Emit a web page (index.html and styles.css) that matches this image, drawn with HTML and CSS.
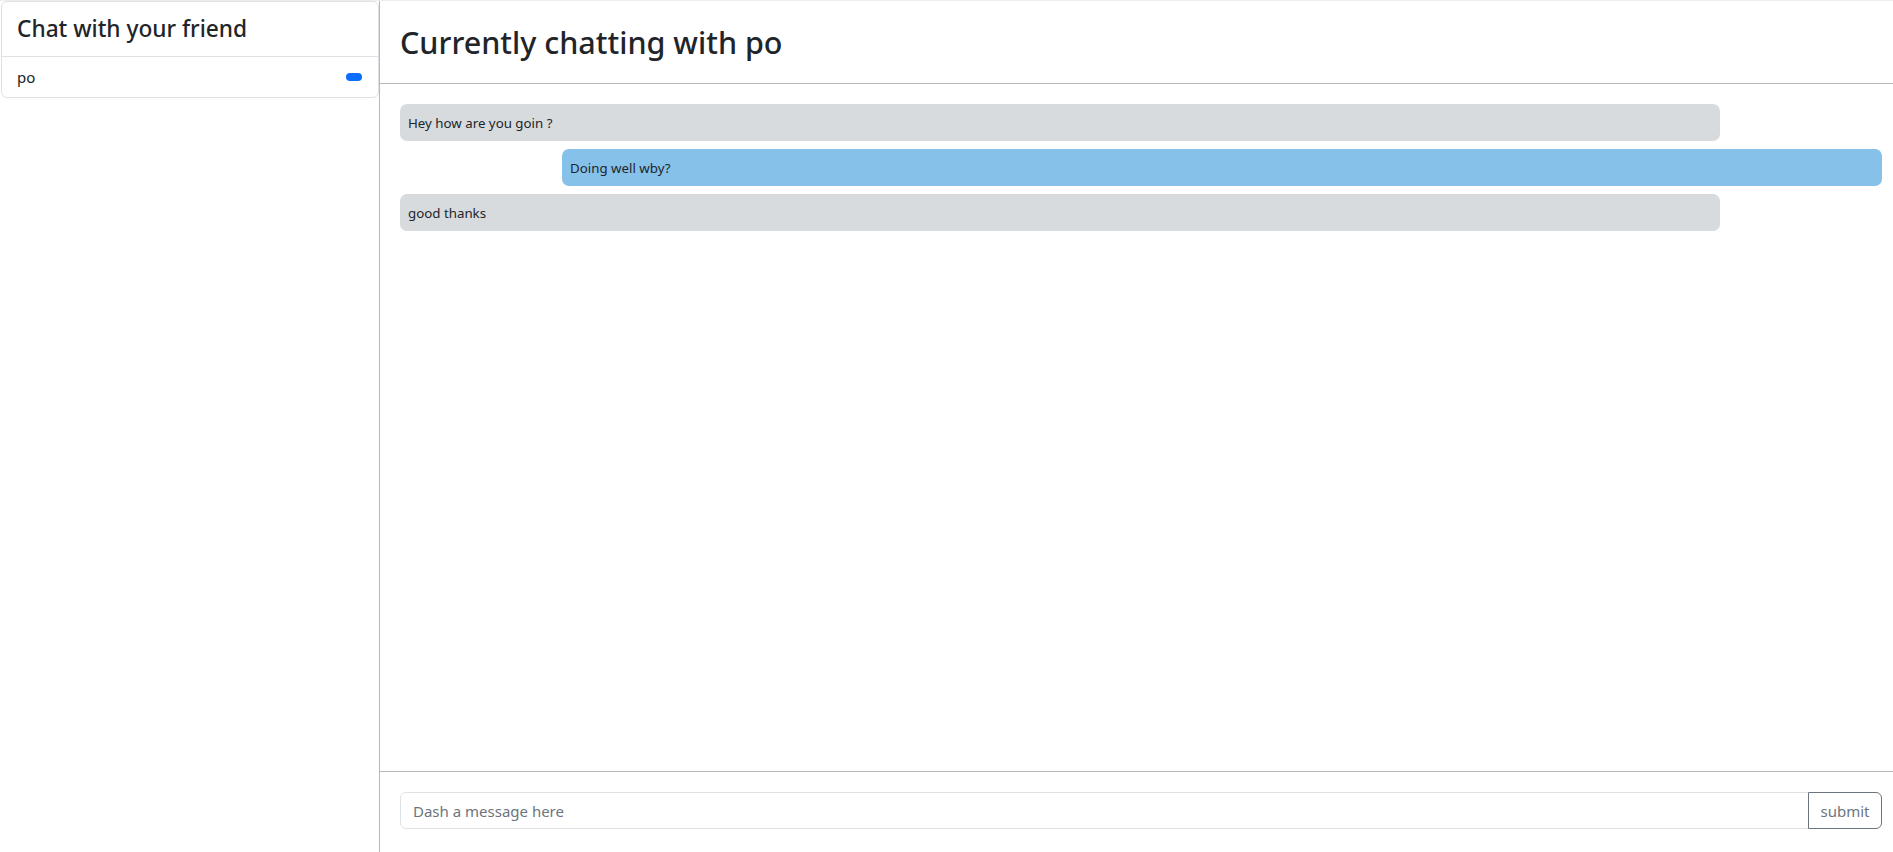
FILE: index.html
```html
<!DOCTYPE html>
<html lang="en">
<head>
<meta charset="utf-8">
<title>Chat</title>
<link rel="stylesheet" href="styles.css">
</head>
<body>
<div class="app">
  <aside class="sidebar">
    <div class="card">
      <div class="card-header"><h4 class="card-title">Chat with your friend</h4></div>
      <ul class="friend-list">
        <li class="friend-item"><span>po</span><span class="badge"></span></li>
      </ul>
    </div>
  </aside>
  <main class="chat">
    <header class="chat-header"><h2 class="chat-title">Currently chatting with po</h2></header>
    <section class="messages">
      <div class="bubble incoming">Hey how are you goin ?</div>
      <div class="bubble outgoing">Doing well wby?</div>
      <div class="bubble incoming">good thanks</div>
    </section>
    <footer class="composer">
      <form class="input-group">
        <input class="msg-input" type="text" placeholder="Dash a message here">
        <button class="submit-btn" type="button">submit</button>
      </form>
    </footer>
  </main>
</div>
</body>
</html>
```
FILE: styles.css
```css
* { box-sizing: border-box; }
html, body { margin: 0; padding: 0; }
body {
  font-family: "Noto Sans", "Open Sans", sans-serif;
  color: #212529;
  background: #fff;
  font-size: 16px;
}
.app {
  display: flex;
  height: 852px;
  border-top: 1px solid #eeeeee;
}
.sidebar {
  width: 380px;
  flex: none;
  border-right: 1px solid #b4b9be;
  padding-left: 1px;
}
.card {
  border: 1px solid #dee2e6;
  border-radius: 6px;
  margin-top: 0;
}
.card-header {
  height: 55px;
  padding: 0 15px;
  display: flex;
  align-items: center;
  border-bottom: 1px solid #dee2e6;
}
.card-title {
  margin: 0;
  font-size: 22.7px;
  font-weight: 500;
  line-height: 1.2;
}
.friend-list { list-style: none; margin: 0; padding: 0; }
.friend-item {
  height: 40px;
  padding: 0 16px 0 15px;
  display: flex;
  align-items: center;
  justify-content: space-between;
  font-size: 15px;
}
.badge {
  width: 16px;
  height: 8px;
  border-radius: 4px;
  background: #0d6efd;
}
.chat {
  flex: 1;
  display: flex;
  flex-direction: column;
  min-width: 0;
}
.chat-header {
  height: 83px;
  flex: none;
  padding: 0 20px;
  display: flex;
  align-items: center;
  border-bottom: 1px solid #b4b9be;
}
.chat-title {
  margin: 0;
  font-size: 30.5px;
  font-weight: 500;
  line-height: 1.2;
}
.messages {
  flex: 1;
  padding: 20px 11px 0 20px;
  display: flex;
  flex-direction: column;
  gap: 8px;
}
.bubble {
  width: 1320px;
  height: 37px;
  padding: 0 8px;
  display: flex;
  align-items: center;
  border-radius: 7px;
  font-size: 13.3px;
}
.incoming { background: #d7dbdd; align-self: flex-start; }
.outgoing { background: #85c1e9; align-self: flex-end; }
.composer {
  flex: none;
  height: 81px;
  border-top: 1px solid #b4b9be;
  padding: 20px 11px 0 20px;
}
.input-group { display: flex; margin: 0; }
.msg-input {
  flex: 1;
  height: 37px;
  border: 1px solid #dee2e6;
  border-radius: 6px 0 0 6px;
  padding: 0 12px;
  font-family: inherit;
  font-size: 15px;
  color: #212529;
  outline: none;
}
.msg-input::placeholder { color: #6c757d; }
.submit-btn {
  width: 74px;
  height: 37px;
  margin-left: -1px;
  border: 1px solid #6c757d;
  border-radius: 0 6px 6px 0;
  background: #fff;
  color: #6c757d;
  font-family: inherit;
  font-size: 15px;
  padding: 0;
}
```
